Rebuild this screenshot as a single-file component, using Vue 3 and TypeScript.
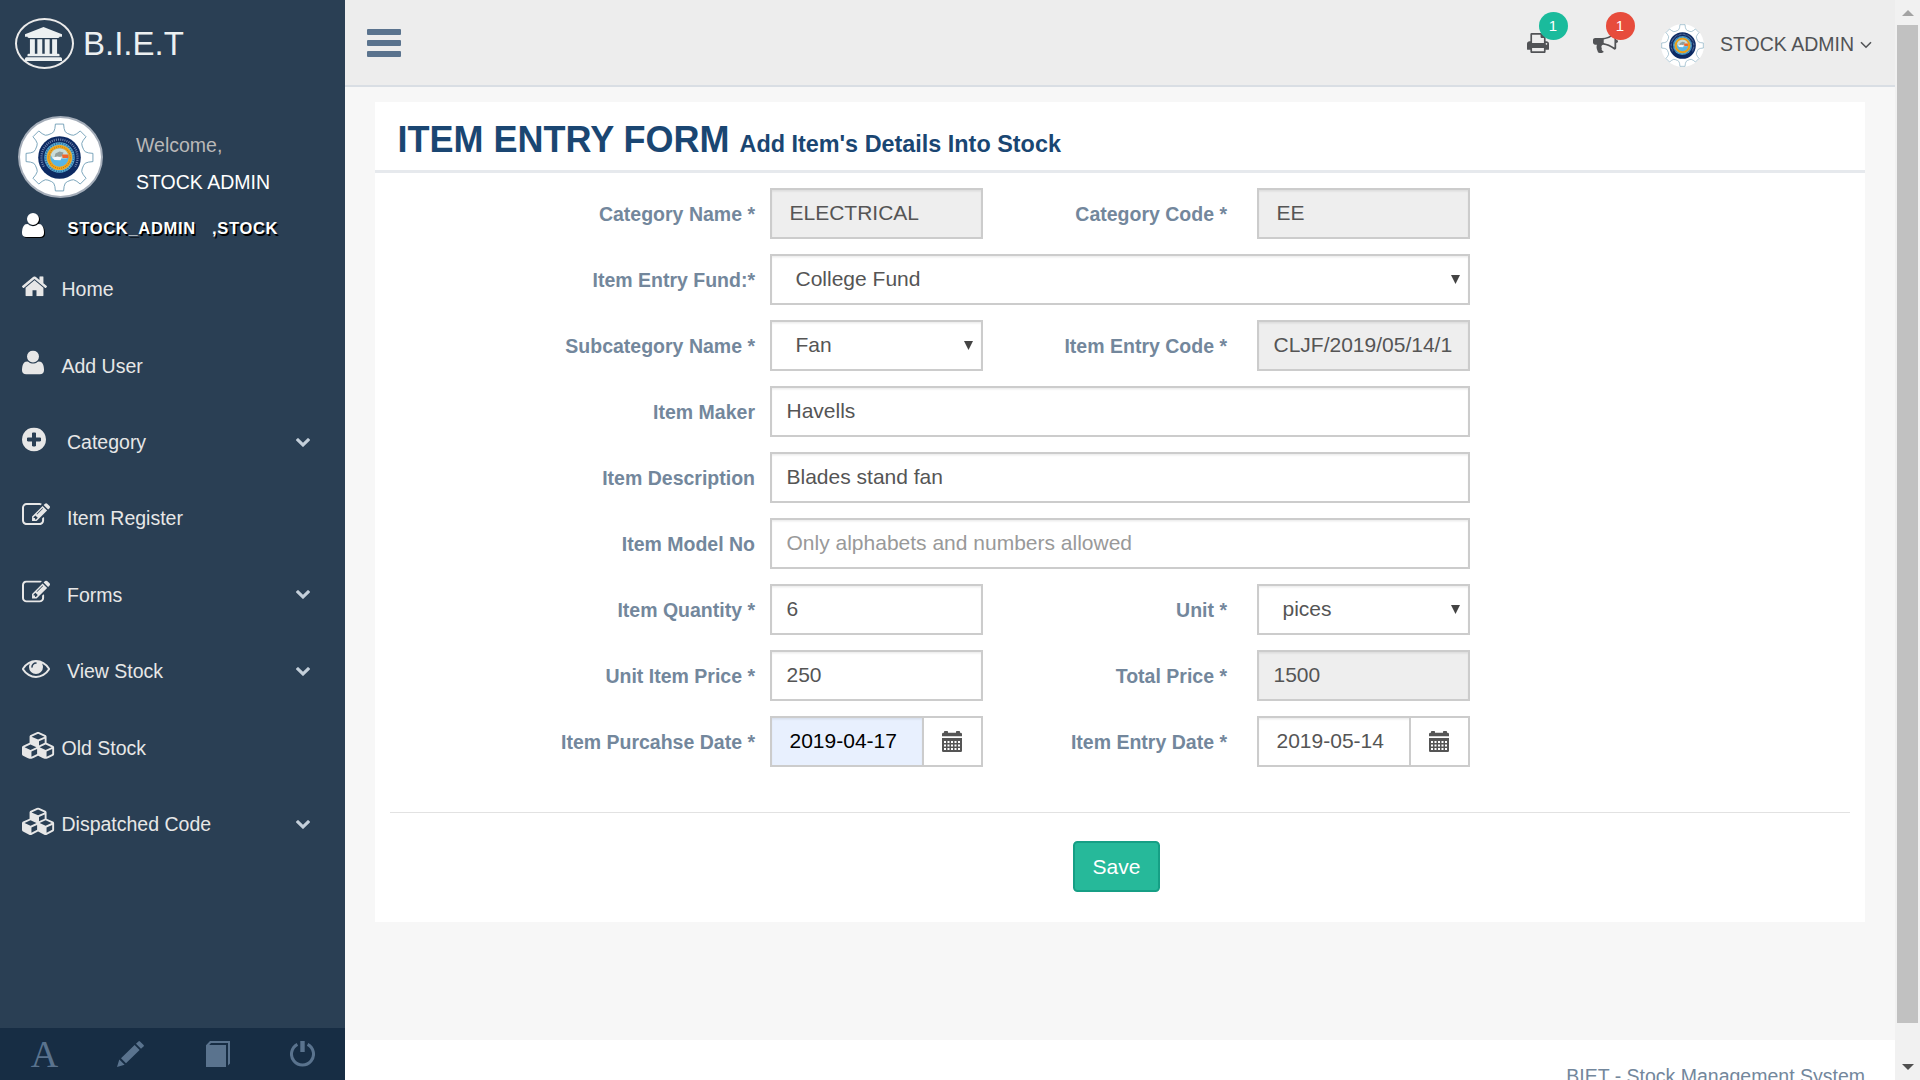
<script setup lang="ts">
interface Glyph { box: string; d: string }
interface NavItem { label: string; icon: string; w: number; h: number; dy: number; textX: number; more?: boolean }
interface Field {
  label: string
  value: string
  kind: 'text' | 'select' | 'date'
  wide?: boolean
  right?: boolean
  locked?: boolean
  inset?: boolean
  filled?: boolean
  placeholder?: string
}

const glyphs: Record<string, Glyph> = {
  home: {
    box: '89 253 1614 1283',
    d: 'M1472 992v480q0 26-19 45t-45 19h-384v-384h-256v384h-384q-26 0-45-19t-19-45v-480q0-1 .5-3t.5-3l575-474 575 474q1 2 1 6zm223-69l-62 74q-8 9-21 11h-3q-13 0-21-7l-692-577-692 577q-12 8-24 7-13-2-21-11l-62-74q-8-10-7-23.5t11-21.5l719-599q32-26 76-26t76 26l244 204v-195q0-14 9-23t23-9h192q14 0 23 9t9 23v408l219 182q10 8 11 21.5t-7 23.5z',
  },
  user: {
    box: '0 0 1408 1536',
    d: 'M1408 1277q0 120-73 189.5t-194 69.5h-874q-121 0-194-69.5t-73-189.5q0-53 3.5-103.5t14-109t26.5-108.5t43-97.5t62-81t85.5-53.5t111.5-20q9 0 42 21.5t74.5 48t108 48t133.5 21.5t133.5-21.5t108-48t74.5-48t42-21.5q61 0 111.5 20t85.5 53.5t62 81t43 97.5t26.5 108.5t14 109t3.5 103.5zM1088 384q0 159-112.5 271.5t-271.5 112.5t-271.5-112.5t-112.5-271.5t112.5-271.5t271.5-112.5t271.5 112.5t112.5 271.5z',
  },
  plus: {
    box: '128 128 1536 1536',
    d: 'M1344 960v-128q0-26-19-45t-45-19h-256v-256q0-26-19-45t-45-19h-128q-26 0-45 19t-19 45v256h-256q-26 0-45 19t-19 45v128q0 26 19 45t45 19h256v256q0 26 19 45t45 19h128q26 0 45-19t19-45v-256h256q26 0 45-19t19-45zm320-64q0 209-103 385.5t-279.5 279.5-385.5 103-385.5-103-279.5-279.5-103-385.5 103-385.5 279.5-279.5 385.5-103 385.5 103 279.5 279.5 103 385.5z',
  },
  edit: {
    box: '0 128 1784 1408',
    d: 'M888 1184l116-116-152-152-116 116v56h96v96h56zm440-720q-16-16-33 1l-350 350q-17 17-1 33t33-1l350-350q17-17 1-33zm80 594v190q0 119-84.5 203.5t-203.5 84.5h-832q-119 0-203.5-84.5t-84.5-203.5v-832q0-119 84.5-203.5t203.5-84.5h832q63 0 117 25 15 7 18 23 3 17-9 29l-49 49q-14 14-32 8-23-6-45-6h-832q-66 0-113 47t-47 113v832q0 66 47 113t113 47h832q66 0 113-47t47-113v-126q0-13 9-22l64-64q15-15 35-7t20 29zm-96-738l288 288-672 672h-288v-288zm444 132l-92 92-288-288 92-92q28-28 68-28t68 28l152 152q28 28 28 68t-28 68z',
  },
  eye: {
    box: '0 384 1792 1152',
    d: 'M1664 960q-152-236-381-353 61 104 61 225 0 185-131.5 316.5t-316.5 131.5-316.5-131.5-131.5-316.5q0-121 61-225-229 117-381 353 133 205 333.5 326.5t434.5 121.5 434.5-121.5 333.5-326.5zm-720-384q0-20-14-34t-34-14q-125 0-214.5 89.5t-89.5 214.5q0 20 14 34t34 14 34-14 14-34q0-86 61-147t147-61q20 0 34-14t14-34zm848 384q0 34-20 69-140 230-376.5 368.5t-499.5 138.5-499.5-139-376.5-368q-20-35-20-69t20-69q140-229 376.5-368t499.5-139 499.5 139 376.5 368q20 35 20 69z',
  },
  cubes: {
    box: '0 0 2304 1792',
    d: 'M640 1632l384-192v-314l-384 164v342zm-64-454l404-173-404-173-404 173zm1088 454l384-192v-314l-384 164v342zm-64-454l404-173-404-173-404 173zm-448-293l384-165v-266l-384 164v267zm-64-379l441-189-441-189-441 189zm1088 518v416q0 36-19 67t-52 47l-448 224q-25 14-57 14t-57-14l-448-224q-4-2-7-4-2 2-7 4l-448 224q-25 14-57 14t-57-14l-448-224q-33-16-52-47t-19-67v-416q0-38 21.5-70t56.5-48l434-186v-400q0-38 21.5-70t56.5-48l448-192q23-10 50-10t50 10l448 192q35 16 56.5 48t21.5 70v400l434 186q36 16 57 48t21 70z',
  },
  bank: {
    box: '0 0 1920 1792',
    d: 'M960 0l960 384v128h-128q0 26-20.5 45t-48.5 19h-1526q-28 0-48.5-19t-20.5-45h-128v-128zm-704 640h256v768h128v-768h256v768h128v-768h256v768h128v-768h256v768h59q28 0 48.5 19t20.5 45v64h-1664v-64q0-26 20.5-45t48.5-19h59v-768zm1595 960q28 0 48.5 19t20.5 45v128h-1920v-128q0-26 20.5-45t48.5-19h1782z',
  },
  chevron: {
    box: '90 533 1612 1035',
    d: 'M1683 808l-742 741q-19 19-45 19t-45-19l-742-741q-19-19-19-45.5t19-45.5l166-165q19-19 45-19t45 19l531 531 531-531q19-19 45-19t45 19l166 165q19 19 19 45.5t-19 45.5z',
  },
  print: {
    box: '64 128 1664 1536',
    d: 'M448 1536h896v-256h-896v256zm0-640h896v-384h-160q-40 0-68-28t-28-68v-160h-640v640zm1152 64q0-26-19-45t-45-19-45 19-19 45 19 45 45 19 45-19 19-45zm128 0v416q0 13-9.5 22.5t-22.5 9.5h-224v160q0 40-28 68t-68 28h-960q-40 0-68-28t-28-68v-160h-224q-13 0-22.5-9.5t-9.5-22.5v-416q0-79 56.5-135.5t135.5-56.5h64v-544q0-40 28-68t68-28h672q40 0 88 20t76 48l152 152q28 28 48 76t20 88v256h64q79 0 135.5 56.5t56.5 135.5z',
  },
  horn: {
    box: '0 128 1792 1536',
    d: 'M1664 640q53 0 90.5 37.5t37.5 90.5-37.5 90.5-90.5 37.5v384q0 52-38 90t-90 38q-417-347-812-380-58 19-91 66t-31 100.5 40 92.5q-20 33-23 65.5t6 58 33.5 55 48 50 61.5 50.5q-29 58-111.5 83t-168.5 11.5-132-55.5q-7-23-29.5-87.5t-32-94.5-23-89-15-101 3.5-98.5 22-110.5h-122q-66 0-113-47t-47-113v-192q0-66 47-113t113-47h480q435 0 896-384 52 0 90 38t38 90v384zm-128 604v-954q-394 302-768 343v270q377 42 768 341z',
  },
}

const nav: NavItem[] = [
  { label: 'Home', icon: 'home', w: 25, h: 20, dy: -2.7, textX: 39.5 },
  { label: 'Add User', icon: 'user', w: 22, h: 24, dy: -3.6, textX: 39.5 },
  { label: 'Category', icon: 'plus', w: 24, h: 24, dy: -2.6, textX: 45, more: true },
  { label: 'Item Register', icon: 'edit', w: 28, h: 22, dy: -3.9, textX: 45 },
  { label: 'Forms', icon: 'edit', w: 28, h: 22, dy: -3.6, textX: 45, more: true },
  { label: 'View Stock', icon: 'eye', w: 28, h: 18, dy: -2, textX: 45, more: true },
  { label: 'Old Stock', icon: 'cubes', w: 34, h: 27.5, dy: -2.2, textX: 39.5 },
  { label: 'Dispatched Code', icon: 'cubes', w: 34, h: 27.5, dy: -2.4, textX: 39.5, more: true },
]

const fields: Field[] = [
  { label: 'Category Name *', value: 'ELECTRICAL', kind: 'text', locked: true, inset: true },
  { label: 'Category Code *', value: 'EE', kind: 'text', right: true, locked: true, inset: true },
  { label: 'Item Entry Fund:*', value: 'College Fund', kind: 'select', wide: true },
  { label: 'Subcategory Name *', value: 'Fan', kind: 'select' },
  { label: 'Item Entry Code *', value: 'CLJF/2019/05/14/11', kind: 'text', right: true, locked: true },
  { label: 'Item Maker', value: 'Havells', kind: 'text', wide: true },
  { label: 'Item Description', value: 'Blades stand fan', kind: 'text', wide: true },
  { label: 'Item Model No', value: '', placeholder: 'Only alphabets and numbers allowed', kind: 'text', wide: true },
  { label: 'Item Quantity *', value: '6', kind: 'text' },
  { label: 'Unit *', value: 'pices', kind: 'select', right: true },
  { label: 'Unit Item Price *', value: '250', kind: 'text' },
  { label: 'Total Price *', value: '1500', kind: 'text', right: true, locked: true },
  { label: 'Item Purcahse Date *', value: '2019-04-17', kind: 'date', filled: true },
  { label: 'Item Entry Date *', value: '2019-05-14', kind: 'date', right: true },
]

// Outline of the eight-tooth gear around the college seal
const gear = (() => {
  const pts: string[] = []
  for (let i = 0; i < 8; i++) {
    const steps: [number, number][] = [[-18, 25], [-12.5, 26], [-9, 29], [-7, 33.2], [7, 33.2], [9, 29], [12.5, 26], [18, 25]]
    for (const [deg, r] of steps) {
      const a = ((i * 45 + deg) * Math.PI) / 180
      pts.push(`${(r * Math.sin(a)).toFixed(2)},${(-r * Math.cos(a)).toFixed(2)}`)
    }
  }
  return pts.join(' ')
})()
</script>

<template>
  <div class="page">
    <svg width="0" height="0" class="defs">
      <symbol id="seal" viewBox="-34 -34 68 68">
        <polygon :points="gear" fill="#fff" stroke="#6f9db5" stroke-width=".9" stroke-linejoin="round" />
        <circle r="21" fill="#0d2a63" />
        <path d="M-15.4 9A17.8 17.8 0 1 1 15.4 9" fill="none" stroke="#7286ae" stroke-width="2.2" stroke-dasharray="1 1.1" />
        <circle r="15" fill="#5bafd6" />
        <circle r="13.8" fill="none" stroke="#2f6c9c" stroke-width="1.6" stroke-dasharray="1.2 1.2" />
        <circle r="12.4" fill="#f5a81c" />
        <circle r="10.6" fill="none" stroke="#b57a1a" stroke-width="1" stroke-dasharray="1 1" />
        <circle r="9" fill="#59b5e3" />
        <path d="M-8.6 -2.6A9 9 0 0 1 8.6 -2.6L7 1H-7Z" fill="#c9dcd8" />
        <path d="M-4 -4L0 -6L4 -5L2 -1L-5 0Z" fill="#929e99" />
        <path d="M-7 0L-2 -1L2 0L1 2.6L-5 2.4Z" fill="#f4f6f7" />
        <path d="M2.4 -3H8.6V.6H3Z" fill="#f0642a" />
      </symbol>
    </svg>

    <aside class="sidebar">
      <div class="brand">
        <span class="brand-ring">
          <svg width="37" height="34" :viewBox="glyphs.bank.box" preserveAspectRatio="none"><path :d="glyphs.bank.d" fill="currentColor" /></svg>
        </span>
        <span class="brand-name">B.I.E.T</span>
      </div>
      <div class="profile">
        <span class="portrait"><svg width="69" height="69"><use href="#seal" /></svg></span>
        <div class="hello">
          <span class="welcome">Welcome,</span>
          <span class="who">STOCK ADMIN</span>
        </div>
      </div>
      <div class="role">
        <svg class="role-icon" width="22" height="24" :viewBox="glyphs.user.box" preserveAspectRatio="none"><path :d="glyphs.user.d" fill="currentColor" /></svg>
        <span class="role-user">STOCK_ADMIN</span>
        <span>,STOCK</span>
      </div>
      <nav class="menu">
        <a v-for="item in nav" :key="item.label" class="menu-item">
          <span class="menu-icon" :style="{ width: item.textX + 'px' }">
            <svg :width="item.w" :height="item.h" :viewBox="glyphs[item.icon].box" preserveAspectRatio="none" :style="{ transform: `translateY(${item.dy}px)` }">
              <path :d="glyphs[item.icon].d" fill="currentColor" />
            </svg>
          </span>
          <span>{{ item.label }}</span>
          <svg v-if="item.more" class="more" width="14" height="9" :viewBox="glyphs.chevron.box" preserveAspectRatio="none"><path :d="glyphs.chevron.d" fill="currentColor" /></svg>
        </a>
      </nav>
      <div class="tools">
        <span class="tool letter">A</span>
        <span class="tool pencil">
          <svg width="27" height="26" viewBox="0 0 27 26" fill="currentColor"><path d="M0 26L2.3 18.6L7.6 23.8ZM4 17.2L17.6 4L22.6 9L9 22.3ZM19 2.7L21.4.4Q22.2-.3 23 .4L26.6 4Q27.2 4.8 26.5 5.5L24 7.8Z" /></svg>
        </span>
        <span class="tool book">
          <svg width="24" height="26" viewBox="0 0 24 26" fill="currentColor"><path d="M0 4.2L4 0H24V22.6L22 24.6V2H5L3.2 4H20V26H0Z" /></svg>
        </span>
        <span class="tool">
          <svg width="25" height="26" viewBox="0 0 25 26"><path d="M7.4 3.3A11 11 0 1 0 17.6 3.3" fill="none" stroke="currentColor" stroke-width="3" /><path d="M10.3 0h4.4v11h-4.4z" fill="currentColor" /></svg>
        </span>
      </div>
    </aside>

    <div class="main">
      <header class="topbar">
        <div class="burger"><i></i><i></i><i></i></div>
        <div class="actions">
          <span class="notice">
            <svg width="22" height="20" :viewBox="glyphs.print.box" preserveAspectRatio="none"><path :d="glyphs.print.d" fill="currentColor" /></svg>
            <b class="badge green">1</b>
          </span>
          <span class="notice second">
            <svg width="25" height="20" :viewBox="glyphs.horn.box" preserveAspectRatio="none"><path :d="glyphs.horn.d" fill="currentColor" /></svg>
            <b class="badge red">1</b>
          </span>
          <span class="mini"><svg width="43" height="43"><use href="#seal" /></svg></span>
          <span class="account">STOCK ADMIN</span>
          <svg class="caret" width="12" height="8" viewBox="0 0 12 8"><path d="M1 1.2L6 6.2L11 1.2" fill="none" stroke="currentColor" stroke-width="1.6" /></svg>
        </div>
      </header>

      <main class="content">
        <section class="card">
          <h2 class="title">ITEM ENTRY FORM <small>Add Item's Details Into Stock</small></h2>
          <form class="form" @submit.prevent>
            <template v-for="f in fields" :key="f.label">
              <label :class="['label', { right: f.right }]">{{ f.label }}</label>
              <div :class="['control', f.kind, { wide: f.wide, locked: f.locked, inset: f.inset, filled: f.filled }]">
                <template v-if="f.kind === 'select'">
                  <span class="chosen">{{ f.value }}</span>
                  <svg class="drop" width="9" height="9" viewBox="0 0 9 9"><path d="M0 0H9L4.5 9Z" fill="#444" /></svg>
                </template>
                <input v-else class="entry" type="text" :value="f.value" :placeholder="f.placeholder" :readonly="f.locked" />
                <span v-if="f.kind === 'date'" class="addon">
                  <svg width="20" height="21" viewBox="0 0 20 21" fill="#555">
                    <path d="M0 5.2V3.2Q0 1.8 1.4 1.8H2V.8Q2 0 2.8 0H5.2Q6 0 6 .8V1.8H14V.8Q14 0 14.8 0H17.2Q18 0 18 .8V1.8H18.6Q20 1.8 20 3.2V5.2Z" />
                    <path fill-rule="evenodd" d="M0 7H20V19.8Q20 21 18.8 21H1.2Q0 21 0 19.8ZM2 10v2h2v-2zM5.5 10v2h2v-2zM9 10v2h2v-2zM12.5 10v2h2v-2zM16 10v2h2v-2zM2 13.5v2h2v-2zM5.5 13.5v2h2v-2zM9 13.5v2h2v-2zM12.5 13.5v2h2v-2zM16 13.5v2h2v-2zM2 17v2h2v-2zM5.5 17v2h2v-2zM9 17v2h2v-2zM12.5 17v2h2v-2zM16 17v2h2v-2z" />
                  </svg>
                </span>
              </div>
            </template>
          </form>
          <hr class="rule" />
          <div class="submit"><button class="save" type="submit">Save</button></div>
        </section>
      </main>

      <footer class="footer">BIET - Stock Management System</footer>
    </div>

    <div class="scroll">
      <svg width="12" height="6" viewBox="0 0 12 6"><path d="M0 6L6 0L12 6Z" fill="#a3a3a3" /></svg>
      <div class="thumb"></div>
      <svg class="down" width="12" height="6" viewBox="0 0 12 6"><path d="M0 0L6 6L12 0Z" fill="#505050" /></svg>
    </div>
  </div>
</template>

<style>
body { margin: 0; overflow: hidden; }
</style>

<style scoped>
.page {
  display: flex;
  width: 1920px;
  height: 1080px;
  overflow: hidden;
  background: #f7f7f7;
  color: #73879c;
  font: 19.5px/24px "Liberation Sans", Arial, sans-serif;
}
.page * { box-sizing: border-box; }
.page svg { display: block; flex: none; }
.page .defs { position: absolute; }

.sidebar {
  display: flex;
  flex-direction: column;
  flex: none;
  width: 345px;
  background: #2a3f54;
  color: #e7e7e7;
}
.brand { display: flex; align-items: center; height: 87px; padding-left: 15px; color: #ecf0f1; }
.brand-ring {
  display: flex;
  align-items: center;
  justify-content: center;
  width: 59px;
  height: 51px;
  border: 2px solid #eaeaea;
  border-radius: 50%;
  padding-right: 2px;
}
.brand-name { margin-left: 9px; font-size: 33px; line-height: 40px; }
.profile { display: flex; height: 111px; padding: 29px 0 0 18px; }
.portrait {
  display: flex;
  justify-content: center;
  align-items: center;
  width: 85px;
  height: 82px;
  padding-right: 2px;
  border: 2px solid #a4adb9;
  border-radius: 50%;
  background: #fff;
}
.hello { display: flex; flex-direction: column; padding: 17px 0 0 33px; }
.welcome { color: #bab8b8; height: 36.5px; }
.who { color: #fff; }
.role {
  display: flex;
  align-items: center;
  height: 53px;
  padding: 0 0 0 22px;
  color: #fff;
  font-size: 16.5px;
  font-weight: bold;
  letter-spacing: .7px;
  text-shadow: 1.5px 1.5px #000;
}
.role-icon { filter: drop-shadow(1.5px 1.5px 0 #000); margin-right: 23.5px; }
.role > span { padding-top: 7px; }
.role-user { width: 144.5px; }
.menu { flex: 1; display: flex; flex-direction: column; }
.menu-item { display: flex; align-items: center; height: 76.43px; padding: 0 35px 0 22px; flex: none; }
.menu-icon { flex: none; }
.more { margin-left: auto; color: #c4cfda; }
.tools { display: flex; height: 52px; background: #172d44; color: #5a738e; }
.tool { flex: 1; display: flex; align-items: center; justify-content: center; }
.letter { font-family: "Liberation Serif", serif; font-size: 38px; padding-left: 2px; }
.pencil { padding-left: 1px; }
.book { padding-left: 2px; }

.main { flex: 1; display: flex; flex-direction: column; min-width: 0; }
.topbar {
  display: flex;
  flex: none;
  justify-content: space-between;
  height: 87px;
  border-bottom: 2px solid #d9dee4;
  background: #ededed;
}
.burger { display: flex; flex-direction: column; gap: 5px; padding: 29px 0 0 22px; }
.burger i { width: 34px; height: 6px; border-radius: 1px; background: #5a738e; }
.actions { display: flex; align-items: flex-start; color: #515356; padding-right: 23px; }
.notice { position: relative; width: 65.5px; padding-top: 33px; }
.second { width: 68px; }
.badge {
  position: absolute;
  top: 12px;
  left: 11.5px;
  width: 29px;
  height: 28px;
  border-radius: 50%;
  color: #fff;
  font-size: 15px;
  font-weight: normal;
  line-height: 28px;
  text-align: center;
}
.second .badge { left: 13px; }
.green { background: #1abb9c; }
.red { background: #e74c3c; }
.mini { margin-top: 23.5px; width: 43px; height: 43px; border-radius: 50%; background: #fff; }
.account { margin: 31.5px 6px 0 16.5px; }
.caret { margin-top: 41px; }

.content { flex: none; height: 953px; padding: 15px 30px 0; }
.card { display: flex; flex-direction: column; height: 820px; background: #fff; }
.title {
  flex: none;
  height: 71px;
  margin: 0;
  padding: 18px 0 0 22.5px;
  border-bottom: 3px solid #e6e9ed;
  color: #1a4672;
  font-size: 36px;
  line-height: 40px;
  white-space: nowrap;
}
.title small { font-size: 23.4px; }
.form {
  display: grid;
  grid-template-columns: 395px 213px 274px 213px;
  grid-auto-rows: 51px;
  row-gap: 15px;
  padding-top: 15px;
}
.label { align-self: center; padding: 0 15px 0 0; text-align: right; font-weight: bold; }
.label.right { padding-right: 30px; }
.control {
  display: flex;
  align-items: stretch;
  min-width: 0;
  border: 2px solid #ccc;
  background: #fff;
  color: #555;
  font-size: 21px;
  box-shadow: inset 0 1.5px 1.5px rgba(0, 0, 0, .075);
}
.wide { grid-column: span 3; }
.locked { background: #eee; }
.entry {
  flex: 1;
  width: 0;
  min-width: 0;
  padding: 0 16.5px 2px 14.5px;
  border: 0;
  outline: 0;
  background: transparent;
  color: inherit;
  font: inherit;
}
.entry::placeholder { color: #999; opacity: 1; }
.inset .entry, .date .entry { padding-left: 17.5px; }
.filled .entry { background: #e8f0fe; color: #000; box-shadow: inset 0 1.5px 1.5px rgba(0, 0, 0, .075); }
.addon {
  display: flex;
  align-items: center;
  justify-content: center;
  width: 59px;
  padding-right: 1px;
  border-left: 2px solid #ccc;
  background: #fff;
}
.select { align-items: center; justify-content: space-between; padding: 0 8px 2px 23.5px; }
.drop { margin-top: 2px; }
.rule { flex: none; width: 1460px; height: 1px; margin: 45px auto 0; border: 0; background: #e2e2e2; }
.submit { display: flex; padding: 28px 0 0 698px; }
.save {
  width: 87px;
  height: 51px;
  padding: 0;
  border: 2px solid #169f85;
  border-radius: 4.5px;
  background: #26b99a;
  color: #fff;
  font: 21px/24px "Liberation Sans", Arial, sans-serif;
}
.footer { flex: none; height: 70px; padding: 24px 30px 0; background: #fff; text-align: right; line-height: 24px; }

.scroll {
  display: flex;
  flex: none;
  flex-direction: column;
  align-items: center;
  width: 25px;
  padding: 10px 0;
  background: #f1f1f1;
}
.thumb { width: 21px; height: 998px; margin-top: 9px; background: #c1c1c1; }
.down { margin-top: auto; }
</style>
